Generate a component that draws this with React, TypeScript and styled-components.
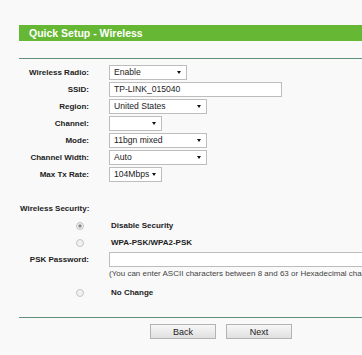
import styled, { createGlobalStyle } from 'styled-components';

const GlobalStyle = createGlobalStyle`
  html, body {
    margin: 0;
    padding: 0;
    background: #f9f9f9;
    overflow: hidden;
  }
  body {
    font-family: "Liberation Sans", Arial, sans-serif;
    color: #222;
  }
`;

const Page = styled.div`
  width: 620px;
  padding: 25px 0 0 19px;
`;

const TitleBar = styled.div`
  height: 16px;
  line-height: 16px;
  padding-left: 10px;
  background: #66b834;
  color: #fff;
  font-size: 10.5px;
  font-weight: bold;
`;

const Divider = styled.div<{ $top: number }>`
  height: 1px;
  margin-top: ${({ $top }) => $top}px;
  background: #5f8f78;
`;

const Form = styled.div`
  margin-top: 5px;
`;

const Row = styled.div<{ $h?: number }>`
  display: flex;
  align-items: center;
  height: ${({ $h }) => $h ?? 17}px;
`;

const Label = styled.div<{ $pad?: number }>`
  width: ${({ $pad }) => 70 - ($pad ?? 0)}px;
  padding-right: ${({ $pad }) => $pad ?? 0}px;
  display: flex;
  justify-content: flex-end;
  font-size: 8px;
  font-weight: bold;
  white-space: nowrap;
`;

const Control = styled.div`
  margin-left: 20px;
  display: flex;
  align-items: center;
`;

const Box = styled.div<{ $w: number }>`
  position: relative;
  box-sizing: border-box;
  width: ${({ $w }) => $w}px;
  height: 15px;
  line-height: 13px;
  padding-left: 4px;
  background: #fff;
  border: 1px solid #bdbdbd;
  font-size: 8.6px;
  color: #222;
  white-space: nowrap;
`;

const Arrow = styled.span`
  position: absolute;
  right: 5px;
  top: 5px;
  width: 0;
  height: 0;
  border-left: 2.5px solid transparent;
  border-right: 2.5px solid transparent;
  border-top: 3px solid #111;
`;

const SectionTitle = styled.div`
  margin-top: 17px;
  height: 17px;
  line-height: 17px;
  padding-left: 1px;
  font-size: 8px;
  font-weight: bold;
`;

const Radio = styled.span<{ $on?: boolean }>`
  box-sizing: border-box;
  width: 8px;
  height: 8px;
  border-radius: 50%;
  border: 1px solid #c4c4c4;
  background: radial-gradient(circle, ${({ $on }) => ($on ? '#8a8a8a 0 1.4px, #ececec 1.8px' : '#f1f1f1 0')});
`;

const OptionText = styled.span`
  padding-left: 2px;
  font-size: 8px;
  font-weight: bold;
`;

const Hint = styled.div`
  margin-left: 90px;
  height: 12px;
  line-height: 12px;
  font-size: 8px;
  color: #444;
  white-space: nowrap;
`;

const Buttons = styled.div`
  display: flex;
  gap: 10px;
  margin: 6px 0 0 131px;
`;

const Button = styled.button`
  box-sizing: border-box;
  width: 66px;
  height: 15px;
  padding: 0;
  border: 1px solid #b3b3b3;
  background: linear-gradient(#f7f7f7, #e0e0e0);
  font-family: "Liberation Sans", Arial, sans-serif;
  font-size: 9px;
  color: #222;
`;

const Select = ({ w, value }: { w: number; value: string }) => (
  <Box $w={w}>
    {value}
    <Arrow />
  </Box>
);

const fields = [
  { label: 'Wireless Radio:', w: 78, value: 'Enable', select: true },
  { label: 'SSID:', w: 173, value: 'TP-LINK_015040', select: false },
  { label: 'Region:', w: 98, value: 'United States', select: true },
  { label: 'Channel:', w: 53, value: '', select: true },
  { label: 'Mode:', w: 98, value: '11bgn mixed', select: true },
  { label: 'Channel Width:', w: 98, value: 'Auto', select: true },
  { label: 'Max Tx Rate:', w: 53, value: '104Mbps', select: true },
];

export default function App() {
  return (
    <>
      <GlobalStyle />
      <Page>
        <TitleBar>Quick Setup - Wireless</TitleBar>
        <Divider $top={17} />
        <Form>
          {fields.map((f) => (
            <Row key={f.label}>
              <Label>{f.label}</Label>
              <Control>
                {f.select ? <Select w={f.w} value={f.value} /> : <Box $w={f.w}>{f.value}</Box>}
              </Control>
            </Row>
          ))}
          <SectionTitle>Wireless Security:</SectionTitle>
          <Row>
            <Label $pad={5}>
              <Radio $on />
            </Label>
            <Control>
              <OptionText>Disable Security</OptionText>
            </Control>
          </Row>
          <Row>
            <Label $pad={5}>
              <Radio />
            </Label>
            <Control>
              <OptionText>WPA-PSK/WPA2-PSK</OptionText>
            </Control>
          </Row>
          <Row>
            <Label>PSK Password:</Label>
            <Control>
              <Box $w={300} />
            </Control>
          </Row>
          <Hint>
            (You can enter ASCII characters between 8 and 63 or Hexadecimal characters between 8 and 64.)
          </Hint>
          <Row style={{ marginTop: 4 }}>
            <Label $pad={5}>
              <Radio />
            </Label>
            <Control>
              <OptionText>No Change</OptionText>
            </Control>
          </Row>
        </Form>
        <Divider $top={16} />
        <Buttons>
          <Button>Back</Button>
          <Button>Next</Button>
        </Buttons>
      </Page>
    </>
  );
}
